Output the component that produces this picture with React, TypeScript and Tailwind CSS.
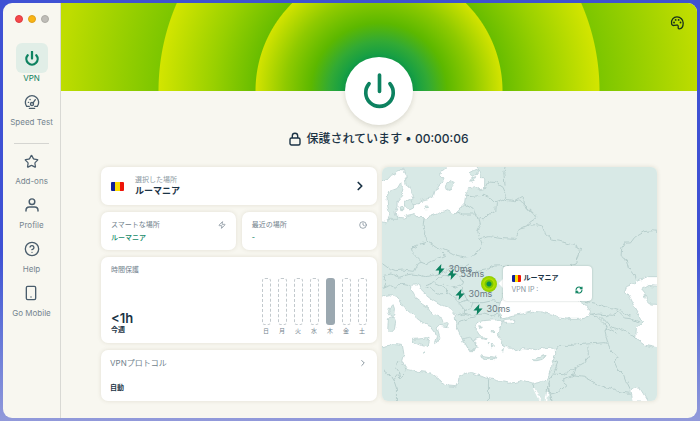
import React from "react";
import { ChevronRight, CircleHelp, Clock, Smartphone, Star, Zap } from "lucide-react";

const DAYS = ["日", "月", "火", "水", "木", "金", "土"];
const ACTIVE_DAY = 4;

function PowerIcon({ className, weight }: { className: string; weight: number }) {
  return (
    <svg viewBox="0 2 36 40" fill="none" stroke="currentColor" strokeWidth={weight} strokeLinecap="round" className={className} aria-hidden>
      <path d="M18 4v18M6.6 13.5a15 15 0 1 0 22.8 0" />
    </svg>
  );
}

function GaugeIcon() {
  return (
    <svg viewBox="0 0 24 24" fill="none" stroke="currentColor" strokeWidth="2" strokeLinecap="round" strokeLinejoin="round" className="size-4" aria-hidden>
      <path d="M4 18.5A10 10 0 1 1 20 18.5M4 18.5h4M16 18.5h4M8 21.5h8" />
      <circle cx="12" cy="15" r="2.3" />
      <path d="M13.6 13.2 17 8.5M6.5 12.5h.5M9 8.2l.2.3" />
    </svg>
  );
}

function PersonIcon() {
  return (
    <svg viewBox="0 0 24 24" fill="none" stroke="currentColor" strokeWidth="2.200" strokeLinecap="round" className="size-4" aria-hidden>
      <circle cx="12" cy="7" r="4.2" />
      <path d="M3 21v-1a5 5 0 0 1 5-5h8a5 5 0 0 1 5 5v1" />
    </svg>
  );
}

function PaletteIcon() {
  return (
    <svg viewBox="0 0 26 26" fill="none" stroke="currentColor" strokeWidth="2.4" strokeLinejoin="round" className="size-[14px]" aria-hidden>
      <path d="M3 14.500C1.500 7 6.500 1.800 13 1.800S24.500 6.500 24.500 13c0 5.500-2.500 10.500-7 10.800-3 .2-2.300-2-2.200-4 .1-2.200-1-3.300-3-3l-4.500.7C5.500 18 3.500 17 3 14.500Z" />
      <g fill="currentColor" stroke="none">
        <circle cx="7.500" cy="12" r="1.700" />
        <circle cx="10.500" cy="7.300" r="1.700" />
        <circle cx="16" cy="7.300" r="1.700" />
        <circle cx="19.500" cy="12" r="1.700" />
      </g>
    </svg>
  );
}

function LockIcon() {
  return (
    <svg viewBox="0 0 12 14" fill="none" stroke="currentColor" strokeWidth="1.4" strokeLinejoin="round" className="h-[14px] w-3" aria-hidden>
      <rect x="1" y="6" width="10" height="7" rx="1.500" />
      <path d="M3.300 6V4a2.700 2.700 0 0 1 5.400 0v2" />
    </svg>
  );
}

function RefreshIcon() {
  return (
    <svg viewBox="0 0 24 24" fill="none" stroke="currentColor" strokeWidth="3.200" strokeLinecap="round" strokeLinejoin="round" className="size-2" aria-hidden>
      <path d="M3 12a9 9 0 0 1 15-6.700l3 3M21 12a9 9 0 0 1-15 6.700l-3-3M21 3v5.500h-5.500M3 21v-5.500h5.500" />
    </svg>
  );
}

function Flag({ className }: { className: string }) {
  return (
    <span className={`flex overflow-hidden rounded-[1px] ${className}`} role="img" aria-label="ルーマニア">
      <span className="flex-1 bg-[#12209a]" />
      <span className="flex-1 bg-[#fddc00]" />
      <span className="flex-1 bg-[#ee1408]" />
    </span>
  );
}

function NavItem({ label, active, children }: { label: string; active?: boolean; children: React.ReactNode }) {
  return (
    <button type="button" className={`flex flex-col items-center text-[8px] leading-[10px] ${active ? "text-[#0d8260]" : "text-[#75858f]"}`}>
      <span className={`flex h-[30px] w-8 items-center justify-center rounded-md ${active ? "bg-[#e1eee7] text-[#0d8260]" : "text-[#4a5d6c]"}`}>
        {children}
      </span>
      <span className="whitespace-nowrap">{label}</span>
    </button>
  );
}

const SEAS = [
  "M10 66 35 55 45 45 62 40 80 27 90 45 94 72 104 92 111 112 110 130 128 132 135 122 150 118 172 112 178 92 190 72 205 58 193 45 198 34 212 22 214 10H300L314 46 327 60 326 90 312 92 296 80 280 84 270 104 266 132 248 152 238 162 214 152 188 160 160 172 145 173 128 172 116 162 98 166 84 174 66 172 50 172 38 176 36 186 10 180Z",
  "M10 412 20 408 42 404 62 412 72 422 84 442 108 462 128 478 150 494 166 500 178 516 182 530 176 548 186 544 192 530 188 516 184 504 192 496 214 500 218 494 204 482 182 470 170 462 160 444 142 432 124 418 116 404 108 390 108 376 130 374 132 384 150 402 170 418 200 436 228 448 238 462 240 490 246 508 256 528 262 544 274 556 282 572 296 572 304 548 294 540 310 534 326 538 312 522 298 500 306 486 322 482 346 480 364 480 372 482 382 490 370 500 368 520 376 534 374 548 388 560 408 562 420 572 440 566 458 568 480 572 502 564 520 562 538 566 540 582 530 602 528 622 520 640 516 658 490 668 470 672 438 662 424 666 400 670 366 662 330 654 290 638 268 640 250 650 248 664 240 680 220 678 190 662 178 650 160 638 128 634 108 628 88 624 78 602 84 580 80 556 60 554 40 556 10 562Z",
  "M378 420 372 440 370 460 380 474 410 466 440 462 470 454 500 456 530 464 550 474 580 478 612 478 638 472 644 454 634 436 614 422 590 410 380 400Z",
  "M378 484 390 478 412 476 418 484 410 490 388 490Z",
  "M748 390 752 380 776 370 790 362 820 350 860 350V380L820 376 798 390 808 402 814 422 824 432 860 434V564L838 562 810 556 780 534 782 504 800 488 790 466 774 440 762 416Z",
  "M762 690 780 684 792 684 802 700 818 726 770 726Z",
];

const ISLANDS = [
  "M38 96 50 92 66 86 78 66 80 82 76 96 84 104 72 116 64 126 64 140 58 152 60 166 64 178 34 178 42 160 36 140 34 118Z",
  "M88 124 104 118 112 128 110 144 98 150 90 142Z",
  "M70 138 84 140 84 152 72 152Z",
  "M214 74 230 60 236 66 224 82 216 94 212 86Z",
  "M282 36 296 28 308 34 302 44 286 46Z",
  "M286 54 300 50 294 60 282 64Z",
  "M148 138 156 138 158 146 150 146Z",
  "M42 444 52 434 56 446 54 462 46 470 38 458Z",
  "M38 476 54 470 60 486 56 508 46 518 36 508Z",
  "M110 538 136 536 160 532 156 548 154 562 138 556 114 546Z",
  "M312 584 328 588 360 592 358 596 332 596 314 590Z",
  "M470 598 490 592 508 586 500 598 484 602 474 602Z",
  "M260 536 282 532 298 542 304 560 292 570 276 564Z",
  "M144 574 148 578 144 580Z",
  "M346 514 354 516 350 522Z",
  "M328 532 332 538 326 538Z",
  "M338 546 344 552 338 554Z",
  "M350 556 356 560 350 564Z",
  "M312 500 320 502 314 506Z",
  "M378 574 386 568 384 578Z",
];

const BORDERS = [
  "M145 173 142 196 150 212 148 232 156 246 128 254 104 268 112 284 134 306 150 312 170 300 196 292 210 286 192 270 172 256 156 246",
  "M196 266 214 274 236 286 266 294 290 292 306 272 318 250 306 212 314 196 308 168 294 162 260 162 244 156",
  "M266 132 292 148 300 164M270 110 296 108 322 106 346 114 362 130 360 154 340 162 326 176 312 176",
  "M326 90 340 66 360 68 382 82 392 106 388 118 362 128M390 10 384 40 388 74",
  "M390 118 416 122 436 110 444 116 446 134 470 156 480 172 462 184 456 198 432 204 420 238 380 236 340 230 314 236",
  "M418 122 432 120 448 136 466 156 480 166M462 196 480 194 500 198 506 220 530 240 560 246 584 252 600 258 614 264 610 288 600 310 580 314",
  "M860 216 830 212 800 216 776 230 764 246 748 246 738 264 736 290 752 300 758 322 778 346 782 360",
  "M20 308 44 326 60 332 82 330 116 334 128 310 140 306M20 346 46 342 70 352 104 342 122 344 150 350 178 344 206 336 222 322 262 322 280 310",
  "M222 322 230 340 250 350 276 348 300 336 332 330 356 318 400 316",
  "M150 374 176 366 188 352 206 346 222 350M180 368 202 378 214 400 184 402 162 386 150 380",
  "M250 350 262 368 244 382 226 378 204 372M214 400 234 412 250 428 272 420 264 400 258 380M250 430 264 446 262 462 246 468M272 420 292 428 322 428 350 422 376 426",
  "M292 428 284 446 264 452M264 460 290 466 320 462 346 468 366 462 374 474M246 490 262 480 280 474 300 470",
  "M20 384 44 376 60 386 78 370 108 376M20 350 30 366 24 390",
  "M70 602 60 626 70 640 52 662 44 648 24 632M54 660 62 684 62 730M338 658 338 730",
  "M88 624 92 634 72 656 70 642",
  "M538 572 552 556 590 556 630 552 664 550 688 548 698 554 688 514 694 498 678 484 666 472 644 466",
  "M630 424 660 430 684 438 708 446 740 454 764 470M640 466 670 462 708 466 728 456 746 474 766 476 790 486",
  "M676 470 692 486 704 500 718 508 730 502 748 514 770 524 780 532M688 504 704 510 724 520",
  "M698 554 708 576 724 588 716 606 724 624 746 646 756 672 764 688",
  "M636 556 638 590 626 608 600 622 562 644 530 642M600 622 594 648 626 652 664 672 700 686 736 696 762 700M594 648 560 662 574 674 548 696 526 702 520 672",
  "M528 644 520 672 522 700 530 730M534 602 546 608 538 628 530 642",
  "M470 674 480 694 494 722M518 664 514 690 512 722",
];

function RegionMap() {
  return (
    <svg viewBox="18 21 828 702" preserveAspectRatio="xMidYMid slice" className="absolute inset-0 size-full" aria-hidden>
      <defs>
        <filter id="coast" filterUnits="userSpaceOnUse" x="0" y="0" width="880" height="750">
          <feTurbulence type="fractalNoise" baseFrequency="0.05" numOctaves="2" seed="4" />
          <feDisplacementMap in="SourceGraphic" scale="16" xChannelSelector="R" yChannelSelector="G" />
        </filter>
      </defs>
      <rect width="880" height="750" fill="#d8e9e6" />
      <g filter="url(#coast)" strokeLinejoin="round">
        <g fill="none" stroke="#b7cecc" strokeWidth="3">
          {BORDERS.map((d) => <path key={d} d={d} />)}
        </g>
        <g fill="#fff" stroke="#bdd3d1" strokeWidth="2.500">
          {SEAS.map((d) => <path key={d} d={d} />)}
        </g>
        <g fill="#d8e9e6" stroke="#bdd3d1" strokeWidth="2.500">
          {ISLANDS.map((d) => <path key={d} d={d} />)}
        </g>
        <path d="M474 684 492 722M516 690 512 724" stroke="#fff" strokeWidth="5" />
      </g>
    </svg>
  );
}

function Ping({ place, children }: { place: string; children: string }) {
  return (
    <span className={`absolute flex -translate-y-1/2 items-center gap-1 text-[9px] leading-3 text-[#6a7a84] ${place}`}>
      <svg viewBox="0 0 10 12" className="h-[11px] w-[10px] fill-[#0d8260]" aria-hidden>
        <path d="M6.500 0 0 7h4L3.500 12 10 5H6Z" />
      </svg>
      {children}
    </span>
  );
}

const CARD = "rounded-[7px] bg-white shadow-[0_0_4px_rgba(90,80,50,0.14)]";

export default function App() {
  return (
    <div className="flex min-h-screen bg-linear-to-b from-[#3f51d4] from-60% to-[#929ada] p-[3px] font-['Inter','Noto_Sans_CJK_JP',sans-serif] text-[#1b3345]">
      <div className="flex flex-1 overflow-hidden rounded-[9px] bg-[#f8f7f0]">
        <aside className="flex w-[58px] shrink-0 flex-col items-center border-r border-[#d9d9d4]">
          <div className="flex h-10 items-start gap-[5px] pt-3">
            <span className="size-2 rounded-full border border-[#dc3b40] bg-[#f6484b]" />
            <span className="size-2 rounded-full border border-[#dfa01c] bg-[#f9b413]" />
            <span className="size-2 rounded-full border border-[#adaba5] bg-[#bfbdb8]" />
          </div>
          <nav className="flex flex-col items-center gap-1">
            <NavItem label="VPN" active><PowerIcon className="h-[15px] w-[14px]" weight={6} /></NavItem>
            <NavItem label="Speed Test"><GaugeIcon /></NavItem>
            <hr className="mt-3 mb-[-2px] w-[35px] border-[#d5d5d1]" />
            <NavItem label="Add-ons"><Star className="size-[15px]" strokeWidth={2} /></NavItem>
            <NavItem label="Profile"><PersonIcon /></NavItem>
            <NavItem label="Help"><CircleHelp className="size-4" strokeWidth={2} /></NavItem>
            <NavItem label="Go Mobile"><Smartphone className="size-4" strokeWidth={2} /></NavItem>
          </nav>
        </aside>

        <main className="flex flex-1 flex-col">
          <header className="flex h-[88px] items-end justify-center bg-[radial-gradient(circle_at_50%_100%,#109c48_34px,#32aa34_50px,#5cb800_68px,#8fca00_94px,#d3e300_123px,#68bd00_124px,#98d000_165px,#d3e500_220px,#7cc600_221px,#bfdd00_320px)]">
            <button type="button" aria-label="Disconnect" className="-mb-[34px] flex size-[68px] items-center justify-center rounded-full bg-white text-[#0d8260] shadow-[0_2px_5px_rgba(60,60,30,0.16)]">
              <PowerIcon className="h-[37px] w-[33px]" weight={4} />
            </button>
            <button type="button" aria-label="Theme" className="absolute top-4 right-4 text-[#16301c]"><PaletteIcon /></button>
          </header>

          <p className="mt-[39px] flex items-center justify-center gap-[5px] text-[12px] leading-[18px] font-medium">
            <LockIcon />
            <span>保護されています • 00:00:06</span>
          </p>

          <div className="mt-[19px] grid grid-cols-2 gap-[5px] px-10">
            <section className="flex flex-col gap-[7px]">
              <button type="button" className={`flex h-[38px] items-center px-[10px] text-left ${CARD}`}>
                <Flag className="h-[9px] w-[13px]" />
                <span className="ml-[11px] flex flex-1 flex-col">
                  <span className="text-[7px] leading-[10px] text-[#8d9aa3]">選択した場所</span>
                  <span className="text-[9px] leading-3 font-semibold">ルーマニア</span>
                </span>
                <ChevronRight className="size-[14px]" strokeWidth={3} />
              </button>

              <div className="grid grid-cols-2 gap-[6px]">
                <div className={`flex h-[38px] flex-col justify-center gap-[3px] px-[10px] ${CARD}`}>
                  <p className="flex items-center justify-between text-[7px] leading-[10px] text-[#71818c]">スマートな場所 <Zap className="size-2" /></p>
                  <p className="text-[7px] leading-[10px] font-medium text-[#148a69]">ルーマニア</p>
                </div>
                <div className={`flex h-[38px] flex-col justify-center gap-[3px] px-[10px] ${CARD}`}>
                  <p className="flex items-center justify-between text-[7px] leading-[10px] text-[#71818c]">最近の場所 <Clock className="size-2" /></p>
                  <p className="text-[7px] leading-[10px] font-medium text-[#148a69]">-</p>
                </div>
              </div>

              <div className={`flex h-[86px] justify-between px-[10px] py-2 ${CARD}`}>
                <div className="flex flex-col justify-between">
                  <p className="text-[7px] leading-[10px] text-[#71818c]">時間保護</p>
                  <div>
                    <p className="text-[13px] leading-[14px] font-semibold">&lt;1h</p>
                    <p className="text-[7px] leading-[10px] font-semibold">今週</p>
                  </div>
                </div>
                <div className="flex items-end gap-[7px]">
                  {DAYS.map((day, i) => (
                    <div key={day} className="flex w-[9px] flex-col items-center gap-[2px] text-[6px] leading-[8px] text-[#71818c]">
                      <span className={`h-[47px] w-full rounded-[3px] ${i === ACTIVE_DAY ? "bg-[#9ba8b0]" : "border border-dashed border-[#c2c9cd]"}`} />
                      {day}
                    </div>
                  ))}
                </div>
              </div>

              <button type="button" className={`flex h-[51px] flex-col justify-between px-[9px] py-2 text-left text-[7px] leading-[10px] ${CARD}`}>
                <span className="flex w-full items-center justify-between text-[8px] text-[#71818c]">VPNプロトコル <ChevronRight className="size-[10px]" /></span>
                <span className="font-semibold">自動</span>
              </button>
            </section>

            <section className="relative overflow-hidden rounded-[6px] shadow-[0_0_4px_rgba(90,80,50,0.16)]">
              <RegionMap />
              <Ping place="left-[53px] top-[102px]">30ms</Ping>
              <Ping place="left-[65px] top-[107px]">53ms</Ping>
              <Ping place="left-[73px] top-[127px]">30ms</Ping>
              <Ping place="left-[91px] top-[142px]">30ms</Ping>
              <span className="absolute top-[109px] left-[99px] size-4 rounded-full bg-[radial-gradient(circle,#0d8d4c_2px,#78c800_3px,#78c800_4px,#b8e000_5px,#a5d800_6px,#8dcc00_8px)]" />
              <span className="absolute top-[113px] left-[118px] size-[7px] rotate-45 bg-white" />
              <div className="absolute top-[99px] left-[121px] flex h-[35px] w-[89px] flex-col justify-center gap-[2px] rounded-[4px] bg-white px-[9px] shadow-[0_0_2px_rgba(30,70,60,0.3)]">
                <p className="flex items-center gap-[3px] text-[7px] leading-[10px] font-semibold"><Flag className="h-[7px] w-[9px]" />ルーマニア</p>
                <p className="flex items-center justify-between text-[7px] leading-[9px] text-[#8793a0]">VPN IP : <button type="button" aria-label="Refresh" className="text-[#0d8260]"><RefreshIcon /></button></p>
              </div>
            </section>
          </div>
        </main>
      </div>
    </div>
  );
}
